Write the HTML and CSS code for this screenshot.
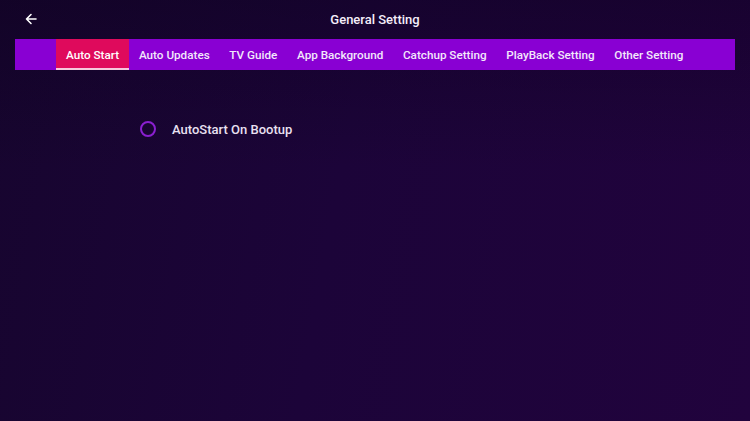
FILE: index.html
```html
<!DOCTYPE html>
<html>
<head>
<meta charset="utf-8">
<link rel="stylesheet" href="styles.css">
</head>
<body>
<div class="screen">
  <header class="topbar">
    <span class="back">
      <svg width="12" height="12" viewBox="0 0 12 12"><path d="M11 6H1.5M6 1.5L1.5 6L6 10.5" stroke="#fff" stroke-width="1.6" fill="none" stroke-linecap="round" stroke-linejoin="round"/></svg>
    </span>
    <h1 class="title">General Setting</h1>
  </header>
  <nav class="tabs">
    <span class="tab active">Auto Start</span>
    <span class="tab">Auto Updates</span>
    <span class="tab">TV Guide</span>
    <span class="tab">App Background</span>
    <span class="tab">Catchup Setting</span>
    <span class="tab">PlayBack Setting</span>
    <span class="tab">Other Setting</span>
  </nav>
  <main class="content">
    <label class="option">
      <span class="radio"></span>
      <span class="option-text">AutoStart On Bootup</span>
    </label>
  </main>
</div>
</body>
</html>
```
FILE: styles.css
```css
html, body {
  margin: 0;
  padding: 0;
  width: 750px;
  height: 421px;
  overflow: hidden;
}
body {
  font-family: Roboto, "Liberation Sans", sans-serif;
  background: linear-gradient(100deg, #17052f 0%, #1c0439 45%, #21033d 100%);
  color: #fff;
}
.screen {
  width: 750px;
  height: 421px;
  background: linear-gradient(180deg, rgba(10,0,25,0.35) 0%, rgba(10,0,25,0) 40%);
}
.topbar {
  position: relative;
  height: 39px;
  display: flex;
  align-items: center;
  justify-content: center;
}
.back {
  position: absolute;
  left: 25px;
  top: 13px;
  width: 12px;
  height: 12px;
  display: flex;
}
.title {
  margin: 0;
  font-size: 13px;
  font-weight: 500;
  color: #f4eefa;
  line-height: 1;
}
.tabs {
  margin: 0 15px;
  height: 31px;
  background: #8900d3;
  display: flex;
  align-items: stretch;
  padding-left: 41px;
}
.tab {
  display: flex;
  align-items: center;
  padding: 0 9.85px;
  font-size: 11.7px;
  font-weight: 500;
  color: #f3e8fb;
  white-space: nowrap;
}
.tab.active {
  padding: 0 10px;
  background: #df0a5c;
  box-shadow: inset 0 -2px 0 #f5c8dc;
  color: #fff;
}
.content {
  padding: 51px 0 0 140px;
}
.option {
  display: flex;
  align-items: center;
  gap: 16px;
}
.radio {
  width: 12px;
  height: 12px;
  border: 2px solid #8a1fd0;
  border-radius: 50%;
}
.option-text {
  font-size: 13px;
  font-weight: 500;
  color: #e9e0f1;
}
```
